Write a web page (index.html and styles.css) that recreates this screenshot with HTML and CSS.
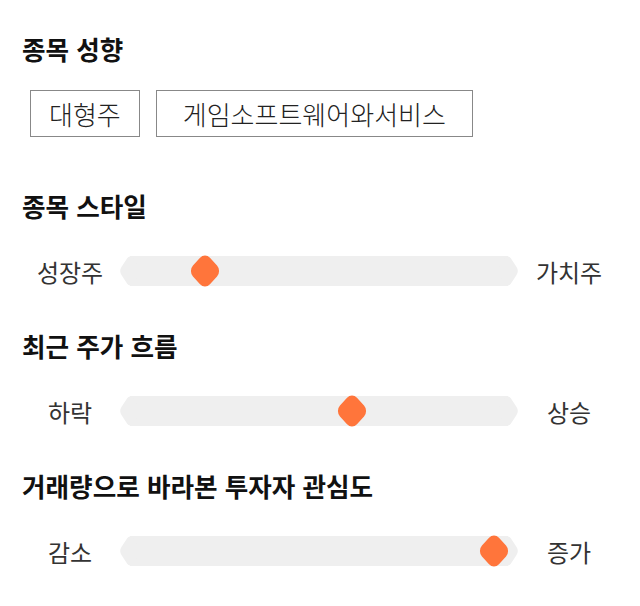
FILE: index.html
```html
<!DOCTYPE html>
<html lang="ko">
<head>
    <meta charset="UTF-8">
    <meta name="viewport" content="width=device-width, initial-scale=1.0">
    <title>종목 분석</title>
    <link rel="stylesheet" href="styles.css">
</head>
<body>
    <div class="container">
        <div class="section">
            <h2 class="section-title">종목 성향</h2>
            <div class="tags">
                <span class="tag">대형주</span>
                <span class="tag tag-wide">게임소프트웨어와서비스</span>
            </div>
        </div>
        <div class="section">
            <h2 class="section-title">종목 스타일</h2>
            <div class="slider-row">
                <span class="slider-label">성장주</span>
                <div class="track">
                    <span class="thumb" style="left: 19.8%"></span>
                </div>
                <span class="slider-label">가치주</span>
            </div>
        </div>
        <div class="section">
            <h2 class="section-title">최근 주가 흐름</h2>
            <div class="slider-row">
                <span class="slider-label">하락</span>
                <div class="track">
                    <span class="thumb" style="left: 58.7%"></span>
                </div>
                <span class="slider-label">상승</span>
            </div>
        </div>
        <div class="section">
            <h2 class="section-title">거래량으로 바라본 투자자 관심도</h2>
            <div class="slider-row">
                <span class="slider-label">감소</span>
                <div class="track">
                    <span class="thumb" style="left: 96.3%"></span>
                </div>
                <span class="slider-label">증가</span>
            </div>
        </div>
    </div>
</body>
</html>
```

FILE: styles.css
```css
body {
    font-family: "Noto Sans CJK KR", "Noto Sans", sans-serif;
    margin: 0;
    padding: 0;
    background-color: #fff;
    color: #333;
}
.container {
    padding: 34px 20px 0 20px;
}
.section {
    margin-bottom: 40px;
}
.section:first-child {
    margin-bottom: 54px;
}
.section-title {
    margin: 0 0 0 2px;
    font-size: 25.6px;
    line-height: 30px;
    font-weight: bold;
    color: #111;
}
.tags {
    display: flex;
    gap: 16px;
    margin: 26px 0 0 10px;
}
.tag {
    display: flex;
    align-items: center;
    height: 45px;
    padding: 0 18px;
    border: 1px solid #888;
    font-size: 26px;
    font-weight: 300;
    color: #222;
}
.tag-wide {
    padding: 0 26px;
}
.slider-row {
    display: grid;
    grid-template-columns: 100px 398px 102px;
    align-items: center;
    height: 40px;
    margin-top: 30px;
}
.slider-label {
    text-align: center;
    font-size: 24px;
    color: #333;
}
.track {
    position: relative;
    height: 30px;
    margin: 0 10px;
    background-color: #efefef;
}
.track::before,
.track::after {
    content: "";
    position: absolute;
    top: 3px;
    width: 24px;
    height: 24px;
    background-color: #efefef;
    border-radius: 6px;
    transform: scaleX(0.66) rotate(45deg);
}
.track::before {
    left: -12px;
}
.track::after {
    right: -12px;
}
.thumb {
    position: absolute;
    top: 3px;
    width: 24px;
    height: 24px;
    margin-left: -12px;
    background-color: #ff753b;
    border-radius: 7px;
    transform: scaleY(1.1) rotate(45deg);
    z-index: 1;
}
```
